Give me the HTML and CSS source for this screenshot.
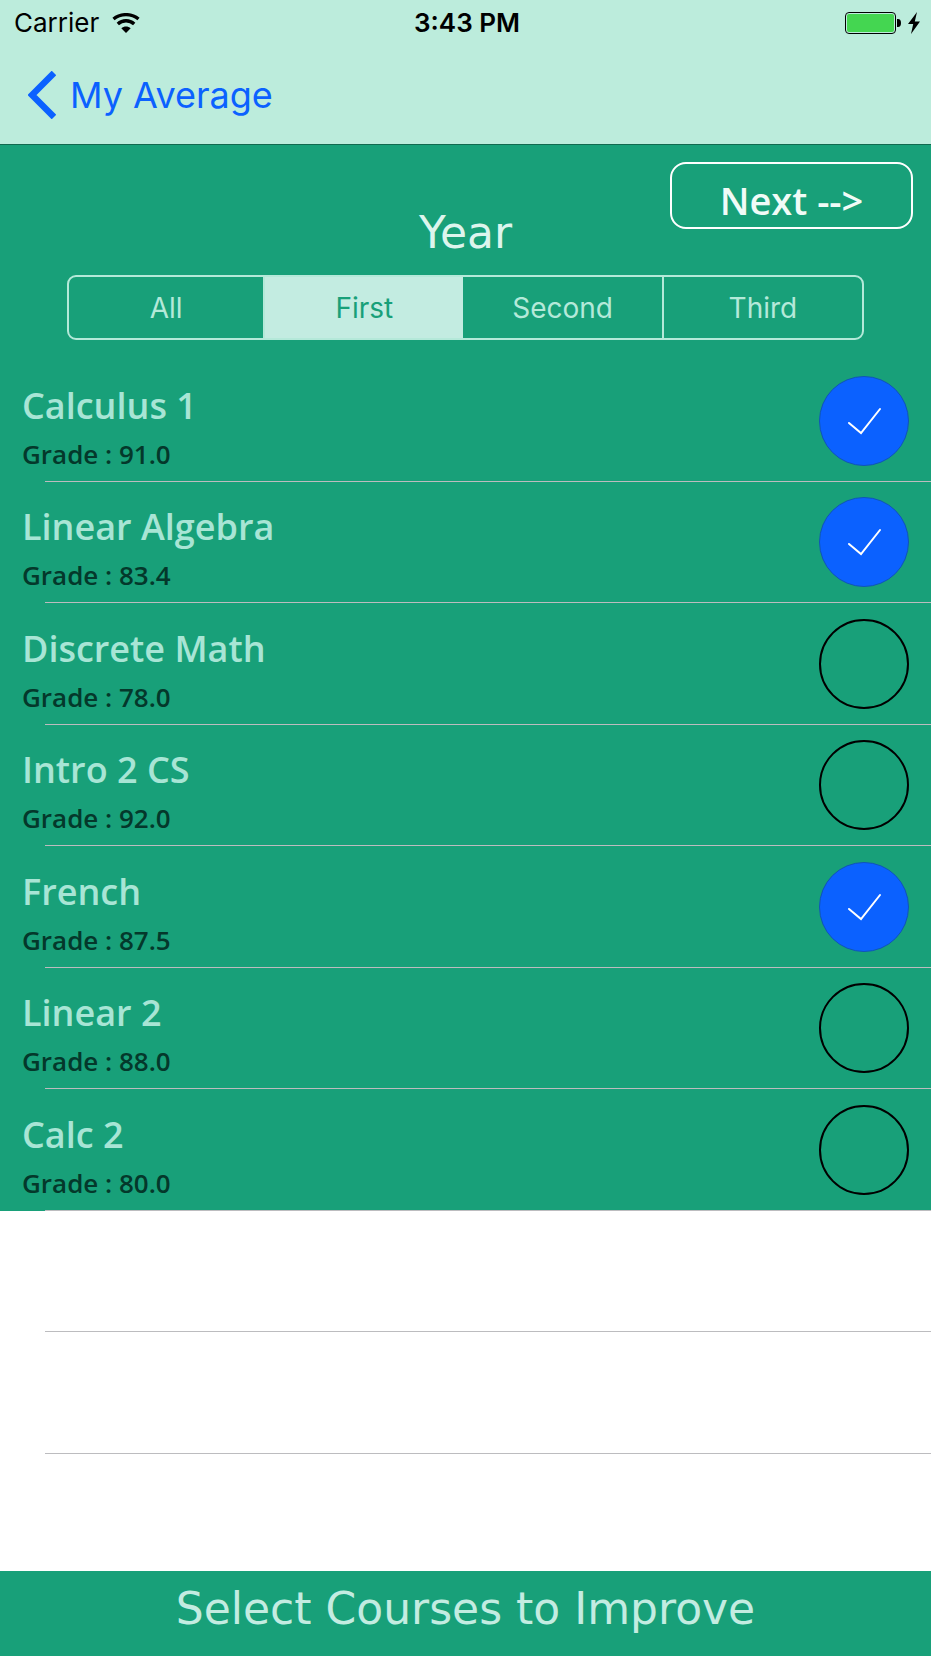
FILE: index.html
```html
<!DOCTYPE html>
<html lang="en">
<head>
<meta charset="utf-8">
<meta name="viewport" content="width=device-width, initial-scale=1">
<title>My Average</title>
<link rel="stylesheet" href="styles.css">
</head>
<body>
<div class="app">
  <header class="top">
    <div class="status">
      <div class="carrier">
        <span>Carrier</span>
        <svg class="wifi" viewBox="0 0 28 20" aria-hidden="true">
          <path d="M1.500 6C8.500 0.200 19.500 0.200 26.500 6" fill="none" stroke="#000" stroke-width="3.400"/>
          <path d="M5.800 11C10.500 6.700 17.500 6.700 22.200 11" fill="none" stroke="#000" stroke-width="3.400"/>
          <path d="M9.300 15.200C12 12.800 16 12.800 18.700 15.200L14 20Z"/>
        </svg>
      </div>
      <time class="time">3:43 PM</time>
      <div class="power">
        <svg class="battery" viewBox="0 0 56 22" aria-hidden="true">
          <rect x="0.500" y="0.500" width="50" height="21" rx="3.500" fill="none" stroke="#000"/>
          <rect x="2" y="2" width="47" height="18" rx="2" fill="#44d651"/>
          <path d="M52 7h1a3 4 0 0 1 0 8h-1z"/>
        </svg>
        <svg class="bolt" viewBox="0 0 12 22" aria-hidden="true">
          <path d="M9 0L0 12H5.200L3 22L12 9.500H6.800Z"/>
        </svg>
      </div>
    </div>
    <a class="back" href="#">
      <svg class="chevron" viewBox="0 0 28 48" aria-hidden="true">
        <path d="M26 2L4 24L26 46" fill="none" stroke="#0b61ff" stroke-width="6.500"/>
      </svg>
      <span>My Average</span>
    </a>
  </header>

  <section class="filter">
    <button class="next" type="button">Next --&gt;</button>
    <h1 class="year" id="year">Year</h1>
    <div class="segments" role="radiogroup" aria-labelledby="year">
      <label class="segment segment-first"><input type="radio" name="year"><span>All</span></label>
      <label class="segment"><input type="radio" name="year" checked><span>First</span></label>
      <label class="segment"><input type="radio" name="year"><span>Second</span></label>
      <label class="segment"><input type="radio" name="year"><span>Third</span></label>
    </div>
  </section>

  <ul class="courses">
    <li class="row course"><label class="item"><span class="text"><span class="name">Calculus 1</span><span class="grade">Grade : 91.0</span></span><span class="tick"><input type="checkbox" checked><svg viewBox="0 0 90 90" aria-hidden="true"><path d="M30 47L42 57L61 33"/></svg></span></label></li>
    <li class="row course"><label class="item"><span class="text"><span class="name">Linear Algebra</span><span class="grade">Grade : 83.4</span></span><span class="tick"><input type="checkbox" checked><svg viewBox="0 0 90 90" aria-hidden="true"><path d="M30 47L42 57L61 33"/></svg></span></label></li>
    <li class="row course"><label class="item"><span class="text"><span class="name">Discrete Math</span><span class="grade">Grade : 78.0</span></span><span class="tick"><input type="checkbox"><svg viewBox="0 0 90 90" aria-hidden="true"><path d="M30 47L42 57L61 33"/></svg></span></label></li>
    <li class="row course"><label class="item"><span class="text"><span class="name">Intro 2 CS</span><span class="grade">Grade : 92.0</span></span><span class="tick"><input type="checkbox"><svg viewBox="0 0 90 90" aria-hidden="true"><path d="M30 47L42 57L61 33"/></svg></span></label></li>
    <li class="row course"><label class="item"><span class="text"><span class="name">French</span><span class="grade">Grade : 87.5</span></span><span class="tick"><input type="checkbox" checked><svg viewBox="0 0 90 90" aria-hidden="true"><path d="M30 47L42 57L61 33"/></svg></span></label></li>
    <li class="row course"><label class="item"><span class="text"><span class="name">Linear 2</span><span class="grade">Grade : 88.0</span></span><span class="tick"><input type="checkbox"><svg viewBox="0 0 90 90" aria-hidden="true"><path d="M30 47L42 57L61 33"/></svg></span></label></li>
    <li class="row course"><label class="item"><span class="text"><span class="name">Calc 2</span><span class="grade">Grade : 80.0</span></span><span class="tick"><input type="checkbox"><svg viewBox="0 0 90 90" aria-hidden="true"><path d="M30 47L42 57L61 33"/></svg></span></label></li>
    <li class="row"></li>
    <li class="row"></li>
  </ul>

  <footer class="hint">Select Courses to Improve</footer>
</div>
</body>
</html>
```
FILE: styles.css
```css
* { box-sizing: border-box; }

body {
  margin: 0;
  background: #fff;
  color: #000;
  font-family: Inter, "Liberation Sans", sans-serif;
}

.app {
  display: flex;
  flex-direction: column;
  min-height: 100vh;
}

.top {
  background: #bcecdc;
  border-bottom: 1px solid #12694f;
}

.status {
  display: grid;
  grid-template-columns: 1fr auto 1fr;
  align-items: center;
  height: 46px;
  padding: 0 11px 0 14px;
  font-size: 26px;
  line-height: 32px;
}

.carrier, .power { display: flex; align-items: center; }
.carrier { gap: 13px; }
.power { justify-content: flex-end; gap: 7px; }
.time { font-weight: 600; }
.wifi { width: 28px; height: 20px; }
.battery { width: 56px; height: 22px; }
.bolt { width: 12px; height: 22px; }

.back {
  display: inline-flex;
  align-items: center;
  gap: 14px;
  height: 98px;
  padding: 0 28px;
  color: #0b61ff;
  font-size: 36px;
  line-height: 48px;
  text-decoration: none;
}
.chevron { width: 28px; height: 48px; }

.filter {
  display: flex;
  flex-direction: column;
  background: #18a079;
  padding: 17px 18px 20px;
}

.next {
  align-self: flex-end;
  width: 243px;
  height: 67px;
  padding: 8px 0 0;
  border: 2px solid #fff;
  border-radius: 16px;
  background: none;
  color: #f0fbf7;
  font-family: "Chalkboard SE", "Open Sans", sans-serif;
  font-size: 38px;
  font-weight: 600;
  line-height: 48px;
}

.year {
  align-self: center;
  margin: -22px 0 16px;
  color: #dcf5ed;
  font-family: Chalkduster, "DejaVu Sans", sans-serif;
  font-size: 44px;
  font-weight: 400;
  line-height: 52px;
}

.segments {
  display: flex;
  height: 65px;
  margin: 0 49px;
  border: 2px solid #b4e9d9;
  border-radius: 9px;
  overflow: hidden;
}
.segment {
  display: grid;
  flex: 98 1 0;
  color: #b4e9d9;
  font-size: 28px;
}
.segment-first { flex-grow: 96; }
.segment + .segment { border-left: 2px solid #b4e9d9; }
.segment:has(input:checked) + .segment { border-left: 0; }
.segment input {
  grid-area: 1 / 1;
  appearance: none;
  margin: 0;
}
.segment input:checked { background: #c3ece1; }
.segment span {
  grid-area: 1 / 1;
  place-self: center;
  line-height: 36px;
}
.segment input:checked + span { color: #18a079; }

.courses {
  flex: 1;
  margin: 0;
  padding: 0;
  list-style: none;
}
.row {
  height: 121px;
  background: linear-gradient(#bcbcbf, #bcbcbf) 45px 100% / 100% 1px no-repeat;
}
.row:nth-child(odd) { height: 122px; }
.course { background-color: #18a079; }

.item {
  display: flex;
  align-items: center;
  justify-content: space-between;
  height: 100%;
  padding: 0 22px 1px;
}
.text {
  display: flex;
  flex-direction: column;
  gap: 8px;
  padding-top: 14px;
  font-family: "Chalkboard SE", "Open Sans", sans-serif;
  font-weight: 600;
}
.name { color: #a8e5d5; font-size: 36px; line-height: 44px; }
.grade { color: #04382b; font-size: 26px; line-height: 36px; }

.tick { display: grid; width: 90px; height: 90px; }
.tick input {
  grid-area: 1 / 1;
  appearance: none;
  width: 90px;
  height: 90px;
  margin: 0;
  border: 2px solid #000;
  border-radius: 50%;
}
.tick input:checked { background: #0b61ff; border: 1px solid #1054b8; }
.tick svg { grid-area: 1 / 1; visibility: hidden; pointer-events: none; }
.tick path { fill: none; stroke: #fff; stroke-width: 2; stroke-linecap: round; }
.tick input:checked + svg { visibility: visible; }

.hint {
  padding: 12px 16px 21px;
  background: #18a079;
  color: #c3ece1;
  font-family: Chalkduster, "DejaVu Sans", sans-serif;
  font-size: 44px;
  line-height: 52px;
  text-align: center;
}
```
